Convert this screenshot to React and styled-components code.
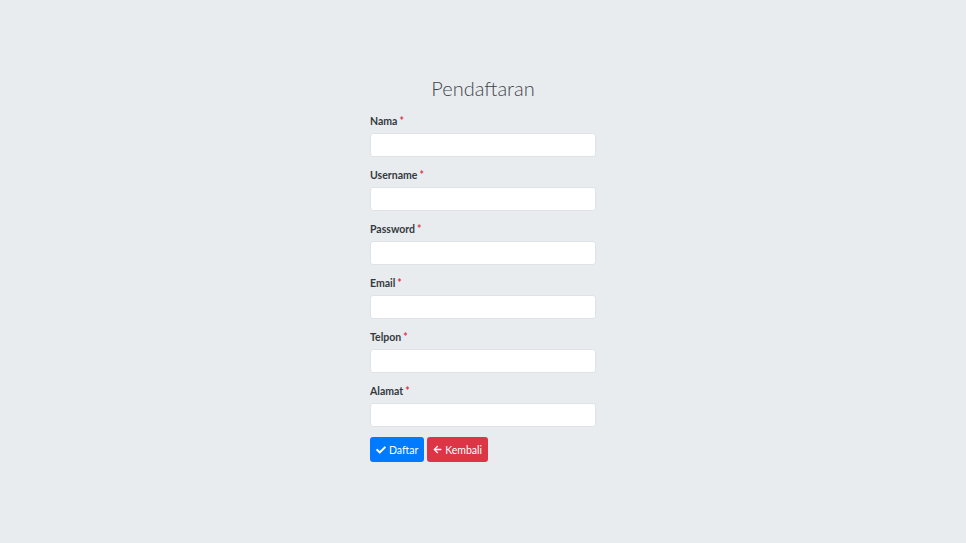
import React from "react";
import styled, { createGlobalStyle } from "styled-components";
import { FaCheck, FaArrowLeft } from "react-icons/fa";

const Global = createGlobalStyle`
  html, body { margin: 0; padding: 0; }
  body {
    background: #e9ecef;
    font-family: "Lato", "Liberation Sans", sans-serif;
    color: #212529;
  }
`;

const Page = styled.div`
  min-height: 543px;
  display: flex;
  justify-content: center;
  padding-top: 75px;
  box-sizing: border-box;
`;

const Form = styled.form`
  width: 226px;
  display: flex;
  flex-direction: column;
`;

const Title = styled.h1`
  margin: 0 0 13px;
  font-size: 20px;
  line-height: 26px;
  font-weight: 300;
  text-align: center;
  color: #3f454b;
`;

const Group = styled.div`
  display: flex;
  flex-direction: column;
  margin-bottom: ${(p) => (p.$last ? "10px" : "11px")};
`;

const Label = styled.label`
  font-size: 10.5px;
  line-height: 14px;
  font-weight: 700;
  color: #343a40;
  margin-bottom: 5px;
`;

const Req = styled.span`
  color: #dc3545;
  margin-left: 2px;
`;

const Input = styled.input`
  height: 24px;
  box-sizing: border-box;
  border: 1px solid #dfe3e7;
  border-radius: 3px;
  background: #fff;
  outline: none;
`;

const Actions = styled.div`
  display: flex;
  gap: 3px;
`;

const Button = styled.button`
  height: 25px;
  display: inline-flex;
  align-items: center;
  gap: 3px;
  padding: 0 6px;
  border: none;
  border-radius: 3px;
  background: ${(p) => (p.$variant === "danger" ? "#dc3545" : "#007bff")};
  color: #fff;
  font-family: "Lato", "Liberation Sans", sans-serif;
  font-size: 10.5px;
  cursor: pointer;
`;

const fields = ["Nama", "Username", "Password", "Email", "Telpon", "Alamat"];

export default function App() {
  return (
    <>
      <Global />
      <Page>
        <Form onSubmit={(e) => e.preventDefault()}>
          <Title>Pendaftaran</Title>
          {fields.map((f, i) => (
            <Group key={f} $last={i === fields.length - 1}>
              <Label>
                {f}
                <Req>*</Req>
              </Label>
              <Input type={f === "Password" ? "password" : "text"} />
            </Group>
          ))}
          <Actions>
            <Button type="submit">
              <FaCheck size={10} /> Daftar
            </Button>
            <Button type="button" $variant="danger">
              <FaArrowLeft size={9} /> Kembali
            </Button>
          </Actions>
        </Form>
      </Page>
    </>
  );
}
